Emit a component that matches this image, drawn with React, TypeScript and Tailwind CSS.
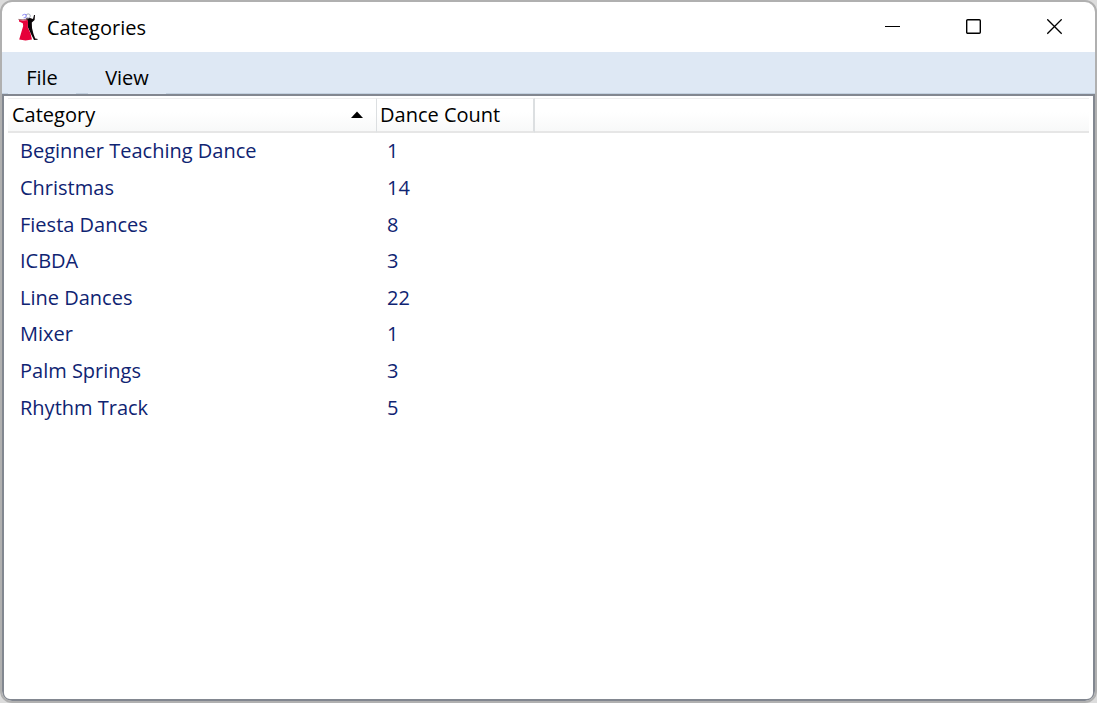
const rows: [string, number][] = [
  ["Beginner Teaching Dance", 1],
  ["Christmas", 14],
  ["Fiesta Dances", 8],
  ["ICBDA", 3],
  ["Line Dances", 22],
  ["Mixer", 1],
  ["Palm Springs", 3],
  ["Rhythm Track", 5],
];

function DancersIcon() {
  return (
    <svg width="20" height="28" viewBox="0 0 20 28" aria-hidden="true">
      <path d="M7.5 5.5 L12 5 L15 6 L16 2 L17 2 L16.6 7 L13.8 9.5 L14 15 L15.5 21 L17.2 25.4 L19.8 26 L19.4 26.8 L16 27 L12.5 20 L9.8 14 L9.6 8 Z" fill="#0a0508" />
      <path d="M1 7 L5 7.6 L9.6 7 L10 9 L9.8 14.5 L12.4 20 L14 26.6 Q7.5 28.2 1.2 26.6 L3.4 19 L5.2 13 L4.8 10.2 L1 8.6 Z" fill="#e60039" />
      <path d="M0.4 6.4 L5 6.8 L10 6" stroke="#8c4a52" strokeWidth="0.8" fill="none" />
      <circle cx="10.2" cy="3" r="2.1" fill="#fff" stroke="#9aa0b0" strokeWidth="0.9" />
      <circle cx="7" cy="4" r="1.7" fill="#fff" />
      <path d="M4.2 2.4 Q6.5 0.6 8.2 1.6 L7.8 4.6 L5.6 4.8" fill="none" stroke="#8f8cf5" strokeWidth="1" />
    </svg>
  );
}

export default function App() {
  return (
    <div className="h-screen bg-[#dcdcdc] font-['Open_Sans','Noto_Sans',sans-serif] text-[20px] leading-7 text-black">
      <main className="flex h-full flex-col overflow-hidden rounded-xl border-2 border-[#b0b0b0] bg-white">
        <header className="flex h-[50px] shrink-0 items-center pl-4">
          <DancersIcon />
          <h1 className="ml-2 flex-1 pt-0.5 pl-px">Categories</h1>
          <div className="flex h-full">
            <button aria-label="Minimize" className="flex w-[81px] items-center justify-center">
              <svg width="16" height="16" viewBox="0 0 16 16"><path d="M0 7.5H15" stroke="#000" /></svg>
            </button>
            <button aria-label="Maximize" className="flex w-[81px] items-center justify-center">
              <svg width="16" height="16" viewBox="0 0 16 16"><rect x="0.7" y="0.7" width="13.6" height="13.6" rx="1" fill="none" stroke="#000" strokeWidth="1.4" /></svg>
            </button>
            <button aria-label="Close" className="flex w-[81px] items-center justify-center">
              <svg width="16" height="16" viewBox="0 0 16 16"><path d="M0.3 0.3L14.7 14.7M14.7 0.3L0.3 14.7" stroke="#000" strokeWidth="1.3" /></svg>
            </button>
          </div>
        </header>
        <nav className="flex h-[42px] shrink-0 bg-[#dee8f4]">
          <span className="w-1.5 border-b border-[#c3d1e0]" />
          <button className="w-[68px] pt-2.5">File</button>
          <span className="w-3 border-b border-[#c3d1e0]" />
          <button className="w-[78px] pt-2.5">View</button>
          <span className="flex-1 border-b border-[#c3d1e0]" />
        </nav>
        <section className="flex-1 rounded-b-lg border-2 border-[#828790] px-1 pt-0.5">
          <table className="h-[328px] w-full table-fixed border-separate border-spacing-0 text-left">
            <colgroup>
              <col className="w-[369px]" />
              <col className="w-[158px]" />
              <col />
            </colgroup>
            <thead>
              <tr className="h-[35px] bg-linear-to-b from-white from-40% to-[#f7f8f8]">
                <th aria-sort="ascending" className="border-t border-b-2 border-r border-t-[#eeeeee] border-r-[#dcdfe1] border-b-[#e6e6e6] pl-1 font-normal">
                  <button className="flex w-full items-center justify-between pr-3">
                    Category
                    <svg width="14" height="8" viewBox="0 0 14 8" aria-hidden="true"><path d="M1 7L7 0.5L13 7Z" /></svg>
                  </button>
                </th>
                <th className="border-t border-b-2 border-r-2 border-t-[#eeeeee] border-r-[#dcdfe1] border-b-[#e6e6e6] pl-[3px] font-normal">
                  <button>Dance Count</button>
                </th>
                <td className="border-t border-b-2 border-t-[#eeeeee] border-b-[#e6e6e6]" />
              </tr>
            </thead>
            <tbody className="text-[#0f2472]">
              {rows.map(([name, count]) => (
                <tr key={name}>
                  <td className="pl-3">{name}</td>
                  <td className="pl-2.5">{count}</td>
                  <td />
                </tr>
              ))}
            </tbody>
          </table>
        </section>
      </main>
    </div>
  );
}
